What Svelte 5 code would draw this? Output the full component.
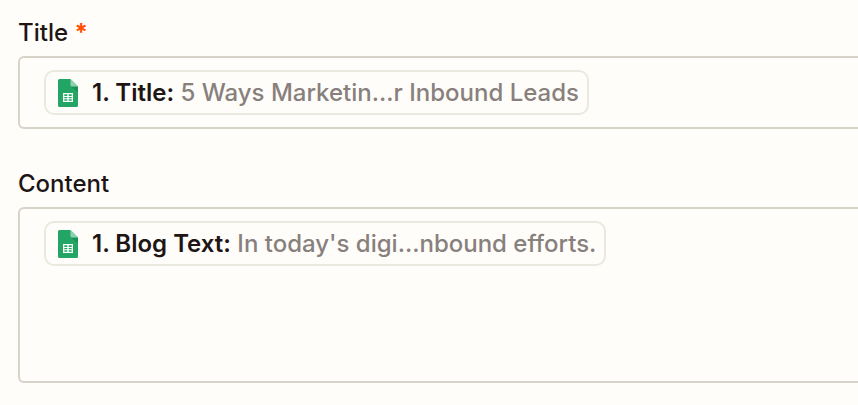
<script lang="ts">
	type Field = {
		id: string;
		label: string;
		required: boolean;
		multiline: boolean;
		token: { name: string; value: string };
	};

	const fields: Field[] = [
		{
			id: 'title',
			label: 'Title',
			required: true,
			multiline: false,
			token: { name: '1. Title:', value: '5 Ways Marketin...r Inbound Leads' }
		},
		{
			id: 'content',
			label: 'Content',
			required: false,
			multiline: true,
			token: { name: '1. Blog Text:', value: "In today's digi...nbound efforts." }
		}
	];
</script>

{#snippet sheetIcon()}
	<svg class="icon" viewBox="0 0 20 28" aria-hidden="true">
		<path fill="#23a566" d="M1.5 0H12.5L20 7.5V26.5A1.5 1.5 0 0 1 18.5 28H1.5A1.5 1.5 0 0 1 0 26.5V1.5A1.5 1.5 0 0 1 1.5 0Z" />
		<path fill="#1c8f57" d="M13 7.5H20V13.5Z" />
		<path fill="#8ed1b1" d="M12.5 0L20 7.5H14A1.5 1.5 0 0 1 12.5 6Z" />
		<path
			fill="#fff"
			fill-rule="evenodd"
			d="M5 14H15V23H5ZM6.3 15.3V17H9.3V15.3ZM10.7 15.3V17H13.7V15.3ZM6.3 18V19.2H9.3V18ZM10.7 18V19.2H13.7V18ZM6.3 20.2V21.7H9.3V20.2ZM10.7 20.2V21.7H13.7V20.2Z"
		/>
	</svg>
{/snippet}

<form class="fields">
	{#each fields as field}
		<div class="field">
			<label for={field.id}>
				{field.label}
				{#if field.required}
					<span class="required">*</span>
				{/if}
			</label>
			<div class="box" class:multiline={field.multiline}>
				<span class="token">
					{@render sheetIcon()}
					<span><strong>{field.token.name}</strong> {field.token.value}</span>
				</span>
				{#if field.multiline}
					<textarea id={field.id}></textarea>
				{:else}
					<input id={field.id} type="text" required={field.required} />
				{/if}
			</div>
		</div>
	{/each}
</form>

<style>
	:global(body) {
		background: #fffdf9;
	}

	.fields {
		display: flex;
		flex-direction: column;
		gap: 39px;
		padding: 17px 0 22px 18px;
		font-family: Inter, 'Liberation Sans', sans-serif;
		font-size: 24px;
		line-height: 32px;
		color: #201515;
	}

	.field {
		display: flex;
		flex-direction: column;
		gap: 7px;
	}

	label {
		font-weight: 500;
	}

	.required {
		font-weight: 700;
		color: #ff4f00;
	}

	/* the box runs off the right edge of the panel */
	.box {
		display: flex;
		align-items: flex-start;
		gap: 8px;
		padding: 12px 0 12px 24px;
		border: 2px solid #d7d3c9;
		border-right: 0;
		border-radius: 6px 0 0 6px;
	}

	.box:focus-within {
		border-color: #695be8;
	}

	.box.multiline {
		min-height: 148px;
	}

	.token {
		display: flex;
		align-items: center;
		flex-shrink: 0;
		gap: 14px;
		padding: 5px 8px 4px 12px;
		border: 2px solid #ebe9df;
		border-radius: 10px;
		font-weight: 500;
		color: #88807d;
		white-space: nowrap;
	}

	.token strong {
		font-weight: 600;
		color: #201515;
	}

	.icon {
		width: 20px;
		height: 28px;
	}

	input,
	textarea {
		flex: 1;
		align-self: stretch;
		min-width: 0;
		padding: 0;
		border: 0;
		outline: none;
		background: transparent;
		font: inherit;
		color: inherit;
		resize: none;
	}
</style>
